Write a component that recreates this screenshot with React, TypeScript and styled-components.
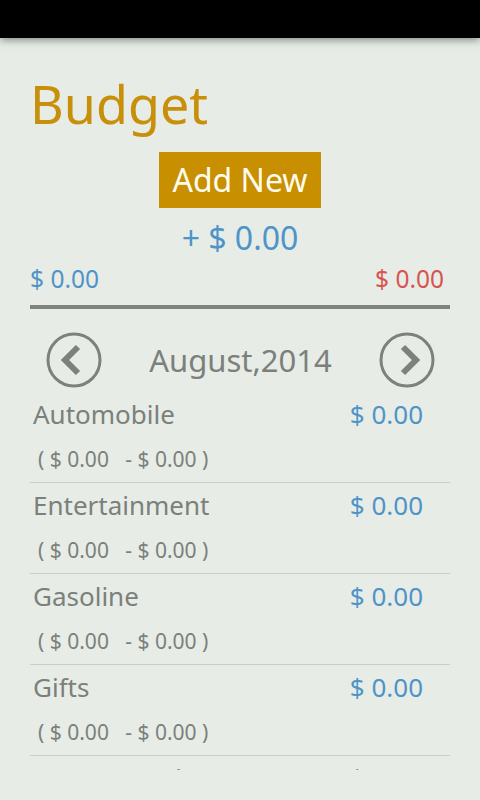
import styled, { createGlobalStyle } from "styled-components";

const GlobalStyle = createGlobalStyle`
  html, body {
    margin: 0;
    padding: 0;
    background: #e7ece7;
  }
  body {
    font-family: "Noto Sans", "Open Sans", sans-serif;
  }
`;

const categories = [
  "Automobile",
  "Entertainment",
  "Gasoline",
  "Gifts",
  "Transportation",
];

const Chevron = ({ dir }: { dir: "left" | "right" }) => (
  <svg width="56" height="56" viewBox="0 0 56 56">
    <circle cx="28" cy="28" r="26" fill="none" stroke="#7c817c" strokeWidth="3" />
    <polyline
      points={dir === "left" ? "32,15 19,28 32,41" : "24,15 37,28 24,41"}
      fill="none"
      stroke="#7c817c"
      strokeWidth="6"
      strokeLinejoin="miter"
    />
  </svg>
);

export default function App() {
  return (
    <>
      <GlobalStyle />
      <Screen>
        <StatusBar />
        <Content>
          <Title>Budget</Title>
          <Center>
            <AddButton>Add New</AddButton>
          </Center>
          <Total>+ $ 0.00</Total>
          <Summary>
            <Money tone="blue">$ 0.00</Money>
            <Money tone="red">$ 0.00</Money>
          </Summary>
          <Divider />
          <MonthRow>
            <NavButton>
              <Chevron dir="left" />
            </NavButton>
            <Month>August,2014</Month>
            <NavButton>
              <Chevron dir="right" />
            </NavButton>
          </MonthRow>
          <List>
            {categories.map((name) => (
              <Row key={name}>
                <RowTop>
                  <Name>{name}</Name>
                  <Amount>$ 0.00</Amount>
                </RowTop>
                <Sub>{"( $ 0.00   - $ 0.00 )"}</Sub>
              </Row>
            ))}
          </List>
        </Content>
      </Screen>
    </>
  );
}

const Screen = styled.div`
  width: 480px;
  height: 800px;
  overflow: hidden;
  background: #e7ece7;
`;

const StatusBar = styled.div`
  height: 38px;
  background: #000;
  box-shadow: 0 2px 8px rgba(60, 70, 60, 0.6);
  position: relative;
`;

const Content = styled.div`
  padding: 34px 30px 0;
  display: flex;
  flex-direction: column;
`;

const Title = styled.h1`
  margin: 0;
  font-weight: 400;
  font-size: 52px;
  line-height: 64px;
  color: #c8900a;
`;

const Center = styled.div`
  display: flex;
  justify-content: center;
  margin-top: 16px;
`;

const AddButton = styled.button`
  width: 162px;
  height: 56px;
  border: none;
  padding: 0;
  background: #c88f00;
  color: #fffbee;
  font-family: "Noto Sans", "Open Sans", sans-serif;
  font-size: 32px;
  line-height: 56px;
`;

const Total = styled.div`
  margin-top: 10px;
  text-align: center;
  font-size: 32px;
  line-height: 40px;
  color: #4f94c7;
`;

const Summary = styled.div`
  display: flex;
  justify-content: space-between;
  margin-top: 6px;
  padding-right: 6px;
`;

const Money = styled.span<{ tone: "blue" | "red" }>`
  font-size: 24.5px;
  line-height: 30px;
  color: ${(p) => (p.tone === "red" ? "#d9534f" : "#4f94c7")};
`;

const Divider = styled.div`
  height: 4px;
  background: #7f847f;
  margin-top: 11px;
`;

const MonthRow = styled.div`
  display: flex;
  justify-content: space-between;
  align-items: center;
  height: 56px;
  margin-top: 23px;
  padding: 0 15px 0 16px;
`;

const NavButton = styled.div`
  width: 56px;
  height: 56px;
`;

const Month = styled.div`
  font-size: 31px;
  line-height: 56px;
  color: #7b807b;
`;

const List = styled.div`
  margin-top: 4px;
  height: 378px;
  overflow: hidden;
`;

const Row = styled.div`
  height: 90px;
  box-sizing: content-box;
  border-bottom: 1px solid #c9cdc9;
`;

const RowTop = styled.div`
  display: flex;
  justify-content: space-between;
  padding: 5px 27px 0 3px;
`;

const Name = styled.span`
  font-size: 26px;
  line-height: 34px;
  color: #7b807b;
`;

const Amount = styled.span`
  font-size: 26px;
  line-height: 34px;
  color: #4f94c7;
`;

const Sub = styled.div`
  margin-top: 13px;
  padding-left: 8px;
  font-size: 21px;
  line-height: 30px;
  color: #7b807b;
  white-space: pre;
`;
